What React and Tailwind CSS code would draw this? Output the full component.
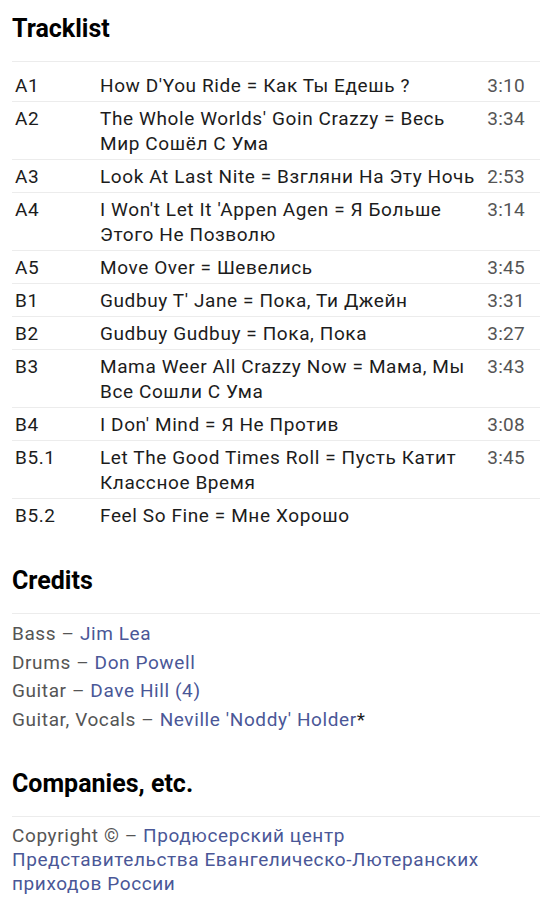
import React from "react";

const TRACKS = [
    { pos: "A1", title: "How D'You Ride = Как Ты Едешь ?", dur: "3:10" },
    { pos: "A2", title: "The Whole Worlds' Goin Crazzy = Весь Мир Сошёл С Ума", dur: "3:34" },
    { pos: "A3", title: "Look At Last Nite = Взгляни На Эту Ночь", dur: "2:53" },
    { pos: "A4", title: "I Won't Let It 'Appen Agen = Я Больше Этого Не Позволю", dur: "3:14" },
    { pos: "A5", title: "Move Over = Шевелись", dur: "3:45" },
    { pos: "B1", title: "Gudbuy T' Jane = Пока, Ти Джейн", dur: "3:31" },
    { pos: "B2", title: "Gudbuy Gudbuy = Пока, Пока", dur: "3:27" },
    { pos: "B3", title: "Mama Weer All Crazzy Now = Мама, Мы Все Сошли С Ума", dur: "3:43" },
    { pos: "B4", title: "I Don' Mind = Я Не Против", dur: "3:08" },
    { pos: "B5.1", title: "Let The Good Times Roll = Пусть Катит Классное Время", dur: "3:45" },
    { pos: "B5.2", title: "Feel So Fine = Мне Хорошо", dur: "" },
];

const CREDITS = [
    { role: "Bass", name: "Jim Lea" },
    { role: "Drums", name: "Don Powell" },
    { role: "Guitar", name: "Dave Hill (4)" },
    { role: "Guitar, Vocals", name: "Neville 'Noddy' Holder", star: true },
];

function Heading({ children }) {
    return (
        <h2 className="pt-[14px] pb-[17px] text-[25px] leading-[30px] font-bold tracking-normal text-black border-b border-[#ececec]">
            {children}
        </h2>
    );
}

export default function App() {
    return (
        <div className="bg-white min-h-[900px] pl-[12px] pr-[11px] text-[19px] tracking-[0.6px] text-[#1c1c1c]" style={{ fontFamily: "Roboto, 'Noto Sans', sans-serif" }}>
            <section>
                <Heading>Tracklist</Heading>
                <div className="mt-[7px]">
                    {TRACKS.map((t, i) => (
                        <div
                            key={t.pos}
                            className={
                                "flex pt-[4px] pb-[3px] leading-[25px] " +
                                (i < TRACKS.length - 1 ? "border-b border-[#ececec]" : "border-b border-transparent")
                            }
                        >
                            <div className="w-[88px] shrink-0 pl-[3px]">{t.pos}</div>
                            <div className="flex-1">{t.title}</div>
                            <div className="shrink-0 w-[59px] pr-[15px] text-right tracking-[0.3px] text-[#555]">{t.dur}</div>
                        </div>
                    ))}
                </div>
            </section>

            <section className="mt-[20px]">
                <Heading>Credits</Heading>
                <div className="pt-[6px] leading-[28.5px] text-[#555]">
                    {CREDITS.map((c) => (
                        <div key={c.role}>
                            {c.role} – <span className="text-[#4a5797]">{c.name}</span>
                            {c.star && <span className="text-[#1c1c1c]">*</span>}
                        </div>
                    ))}
                </div>
            </section>

            <section className="mt-[21px]">
                <Heading>Companies, etc.</Heading>
                <p className="pt-[7px] pr-[30px] leading-[24px] text-[#555]">
                    Copyright © – <span className="text-[#4a5797]">Продюсерский центр Представительства Евангелическо-Лютеранских приходов России</span>
                </p>
            </section>
        </div>
    );
}
